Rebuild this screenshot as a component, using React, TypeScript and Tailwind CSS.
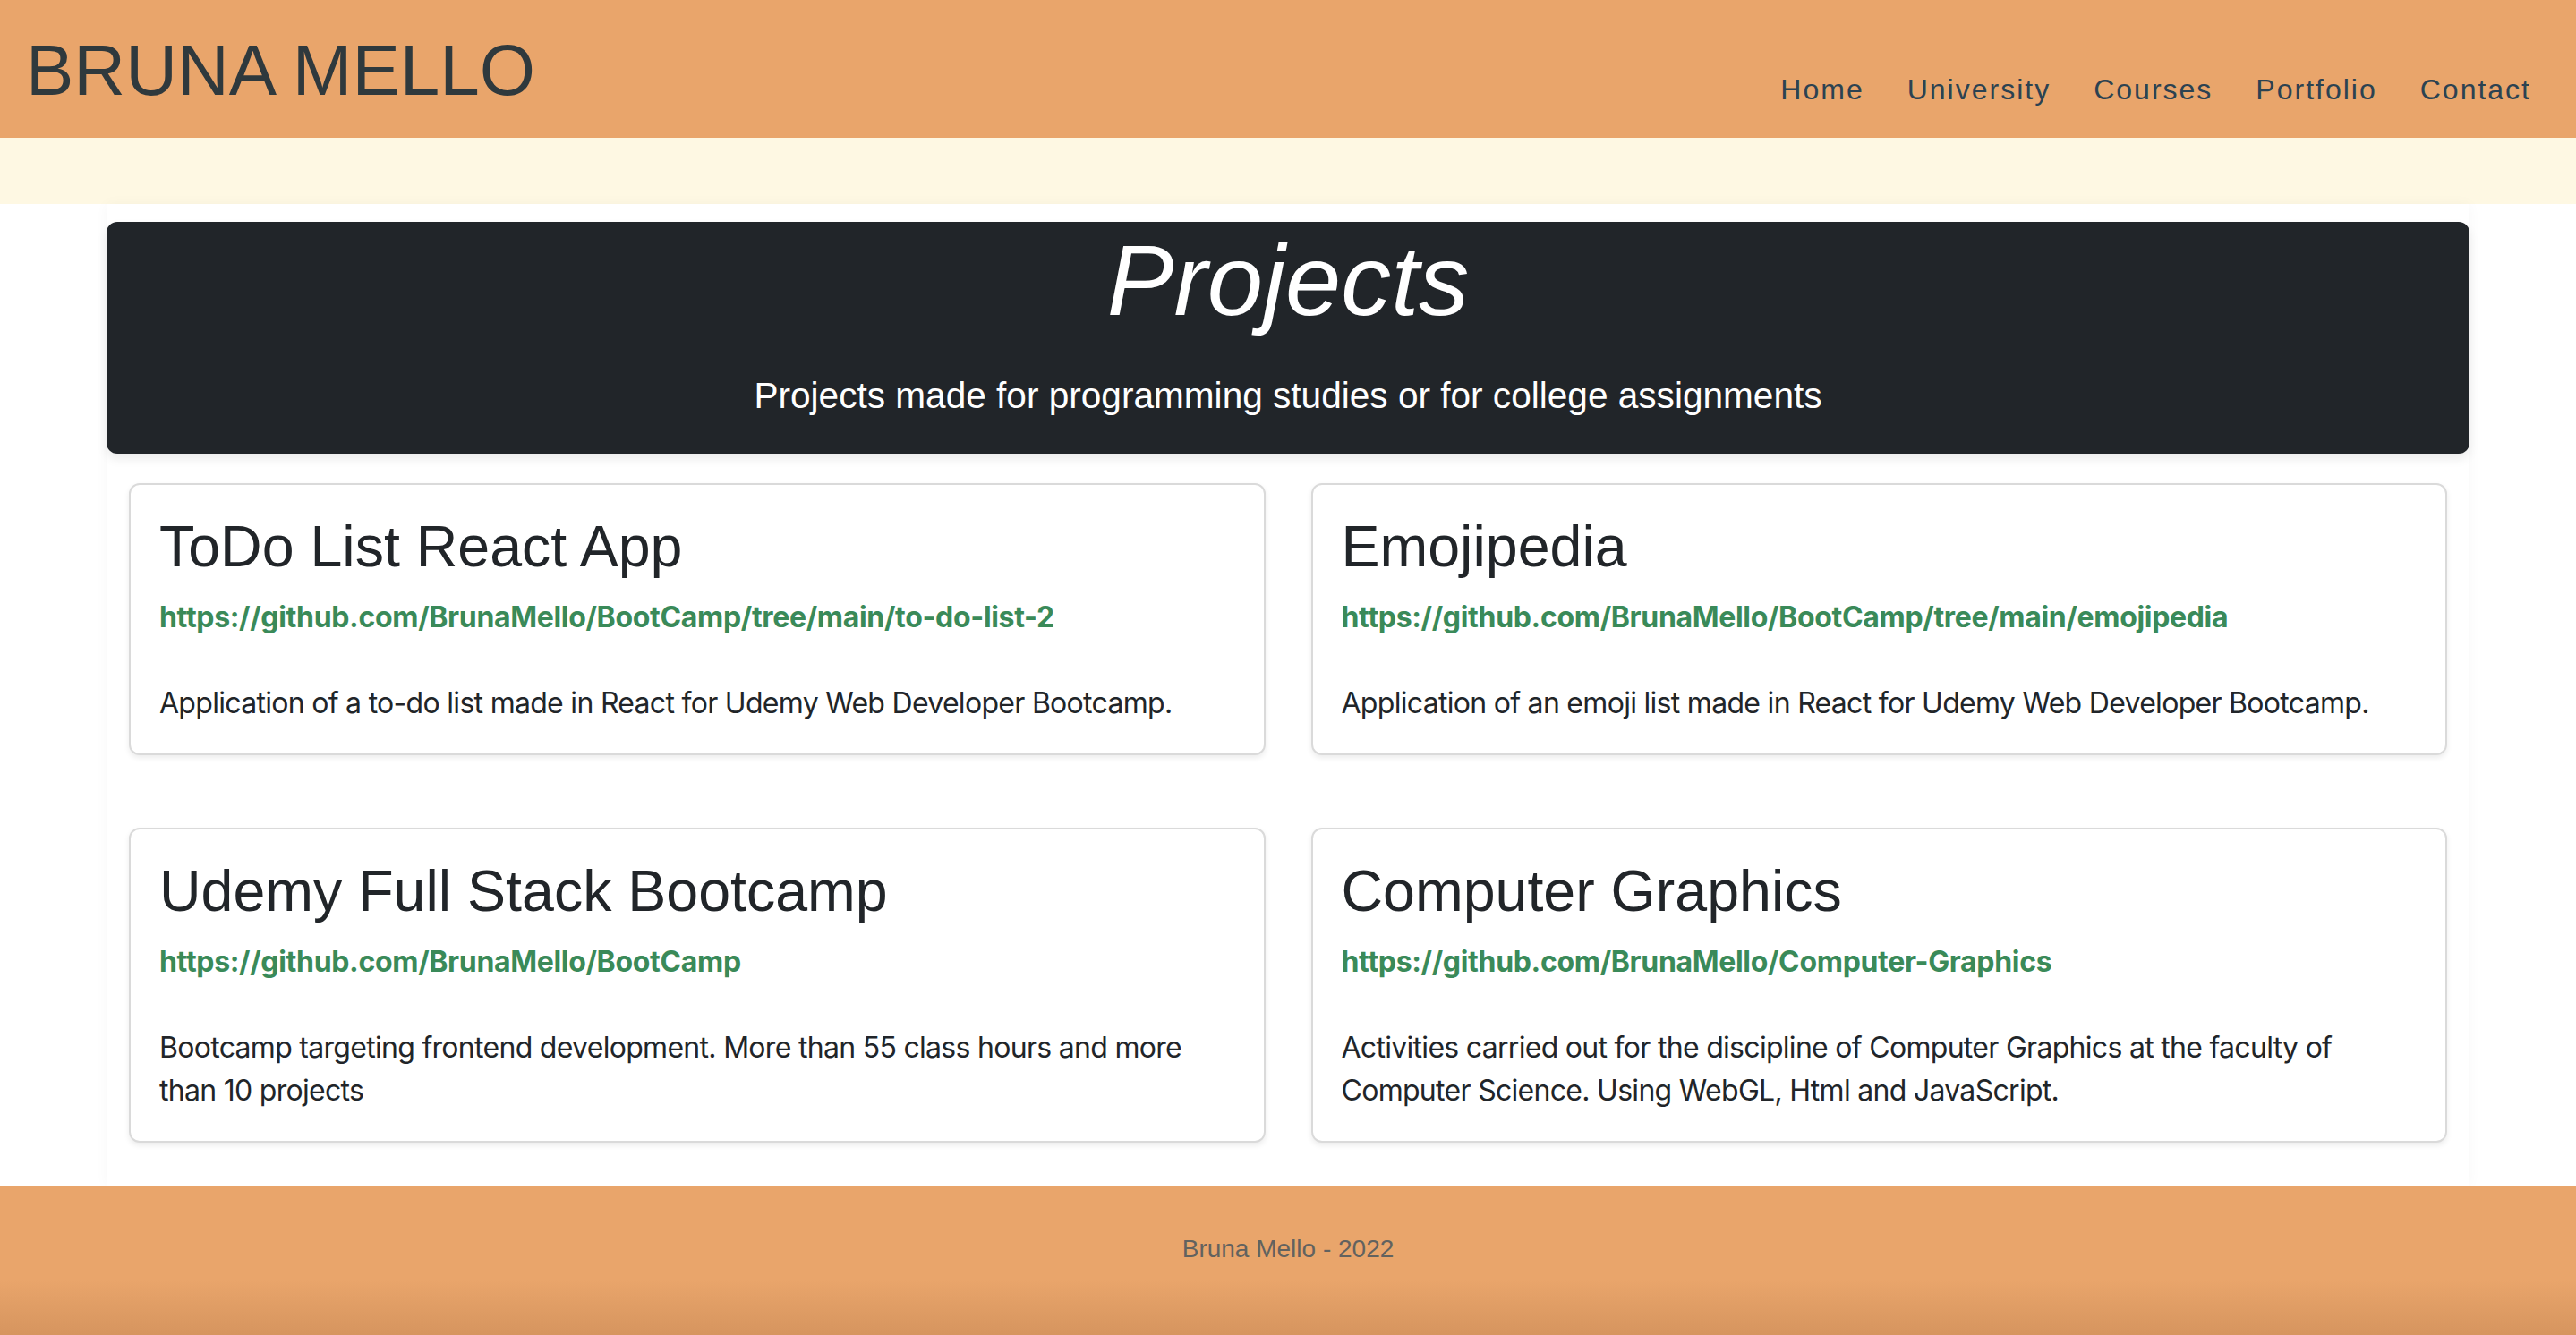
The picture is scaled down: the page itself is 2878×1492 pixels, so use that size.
import React from "react";

const projects = [
  {
    title: "ToDo List React App",
    link: "https://github.com/BrunaMello/BootCamp/tree/main/to-do-list-2",
    desc: "Application of a to-do list made in React for Udemy Web Developer Bootcamp.",
  },
  {
    title: "Emojipedia",
    link: "https://github.com/BrunaMello/BootCamp/tree/main/emojipedia",
    desc: "Application of an emoji list made in React for Udemy Web Developer Bootcamp.",
  },
  {
    title: "Udemy Full Stack Bootcamp",
    link: "https://github.com/BrunaMello/BootCamp",
    desc: "Bootcamp targeting frontend development. More than 55 class hours and more than 10 projects",
  },
  {
    title: "Computer Graphics",
    link: "https://github.com/BrunaMello/Computer-Graphics",
    desc: "Activities carried out for the discipline of Computer Graphics at the faculty of Computer Science. Using WebGL, Html and JavaScript.",
  },
];

const nav = ["Home", "University", "Courses", "Portfolio", "Contact"];

function Card({ p }: { p: (typeof projects)[number] }) {
  return (
    <div className="rounded-[12px] border-2 border-[#dadada] bg-white p-[32px] shadow-[0_3px_6px_rgba(0,0,0,0.08)]">
      <h2 className="mb-[18px] font-['Liberation_Sans',sans-serif] text-[64.5px] leading-[1.15] text-[#212529]">
        {p.title}
      </h2>
      <a
        href="#"
        className="block font-['Inter',sans-serif] text-[32px] font-bold leading-[48px] tracking-[-0.01em] text-[#3a8a59]"
      >
        {p.link}
      </a>
      <p className="mt-[48px] font-['Inter',sans-serif] text-[32px] leading-[48px] tracking-[-0.022em] text-[#212529]">
        {p.desc}
      </p>
    </div>
  );
}

export default function App() {
  return (
    <div className="flex min-h-[1492px] flex-col bg-white font-['Liberation_Sans',sans-serif]">
      <header className="flex h-[154px] items-start justify-between bg-[#E9A56B]">
        <h1 className="pl-[29px] pt-[39px] text-[80px] leading-none text-[#2f393d]">BRUNA MELLO</h1>
        <nav className="flex gap-[48px] pr-[50px] pt-[84px]">
          {nav.map((n) => (
            <a key={n} href="#" className="text-[32px] leading-none tracking-[2px] text-[#2c4251]">
              {n}
            </a>
          ))}
        </nav>
      </header>
      <div className="h-[74px] bg-[#FEF8E3]" />
      <main className="mx-auto w-[2640px] flex-1 bg-white shadow-[0_0_14px_rgba(0,0,0,0.035)]">
        <section className="mt-[20px] rounded-[12px] bg-[#212529] pb-[35px] pt-[10px] text-center text-white shadow-[0_6px_12px_rgba(0,0,0,0.08)]">
          <h2 className="text-[112px] italic leading-none">Projects</h2>
          <p className="mt-[42px] text-[40.6px] leading-[60px]">
            Projects made for programming studies or for college assignments
          </p>
        </section>
        <div className="mt-[33px] grid grid-cols-2 gap-x-[51px] gap-y-[81px] px-[25px] pb-[48px]">
          {projects.map((p) => (
            <Card key={p.title} p={p} />
          ))}
        </div>
      </main>
      <footer className="flex h-[170px] justify-center bg-[linear-gradient(to_bottom,#E9A56B_0%,#E9A56B_62%,#D5945E_100%)] pt-[54px]">
        <span className="text-[28px] leading-[34px] text-[#62625f]">Bruna Mello - 2022</span>
      </footer>
    </div>
  );
}
